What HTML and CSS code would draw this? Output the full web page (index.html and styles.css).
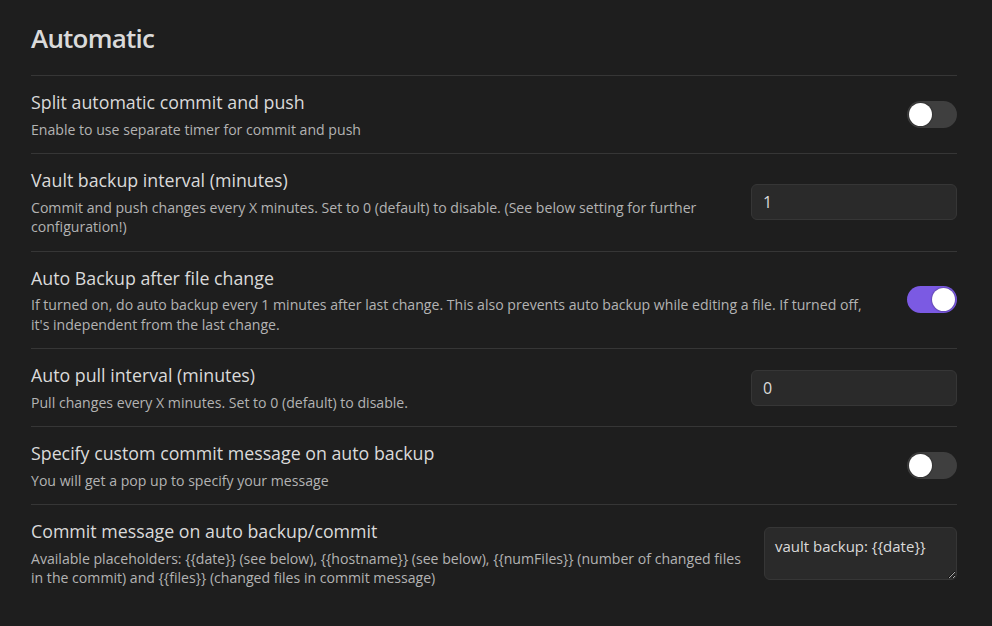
FILE: index.html
```html
<!DOCTYPE html>
<html lang="en">
<head>
<meta charset="utf-8">
<title>Automatic</title>
<link rel="stylesheet" href="styles.css">
</head>
<body>
<div class="settings">
  <h2 class="section-title">Automatic</h2>

  <div class="setting-item">
    <div class="setting-info">
      <div class="setting-name">Split automatic commit and push</div>
      <div class="setting-desc">Enable to use separate timer for commit and push</div>
    </div>
    <div class="setting-control">
      <div class="toggle"><div class="knob"></div></div>
    </div>
  </div>

  <div class="setting-item">
    <div class="setting-info">
      <div class="setting-name">Vault backup interval (minutes)</div>
      <div class="setting-desc">Commit and push changes every X minutes. Set to 0 (default) to disable. (See below setting for further configuration!)</div>
    </div>
    <div class="setting-control">
      <input class="text-input" type="text" value="1">
    </div>
  </div>

  <div class="setting-item">
    <div class="setting-info">
      <div class="setting-name">Auto Backup after file change</div>
      <div class="setting-desc">If turned on, do auto backup every 1 minutes after last change. This also prevents auto backup while editing a file. If turned off,<br>it's independent from the last change.</div>
    </div>
    <div class="setting-control">
      <div class="toggle is-on"><div class="knob"></div></div>
    </div>
  </div>

  <div class="setting-item">
    <div class="setting-info">
      <div class="setting-name">Auto pull interval (minutes)</div>
      <div class="setting-desc">Pull changes every X minutes. Set to 0 (default) to disable.</div>
    </div>
    <div class="setting-control">
      <input class="text-input" type="text" value="0">
    </div>
  </div>

  <div class="setting-item">
    <div class="setting-info">
      <div class="setting-name">Specify custom commit message on auto backup</div>
      <div class="setting-desc">You will get a pop up to specify your message</div>
    </div>
    <div class="setting-control">
      <div class="toggle"><div class="knob"></div></div>
    </div>
  </div>

  <div class="setting-item">
    <div class="setting-info">
      <div class="setting-name">Commit message on auto backup/commit</div>
      <div class="setting-desc">Available placeholders: {{date}} (see below), {{hostname}} (see below), {{numFiles}} (number of changed files in the commit) and {{files}} (changed files in commit message)</div>
    </div>
    <div class="setting-control">
      <textarea class="text-area">vault backup: {{date}}</textarea>
    </div>
  </div>
</div>
</body>
</html>
```

FILE: styles.css
```css
html, body {
  margin: 0;
  padding: 0;
  background: #1e1e1e;
}

body {
  font-family: "Open Sans", "Noto Sans", sans-serif;
  color: #dadada;
}

.settings {
  padding: 22px 35px 0 31px;
}

.section-title {
  margin: 0 0 21px 0;
  font-size: 26px;
  line-height: 32px;
  font-weight: 600;
  letter-spacing: -0.8px;
  color: #dadada;
}

.setting-item {
  display: flex;
  align-items: center;
  padding: 14px 0;
  border-top: 1px solid #363636;
}

.setting-info {
  flex: 1 1 auto;
  margin-right: 16px;
}

.setting-name {
  font-size: 17.8px;
  line-height: 24px;
  color: #dadada;
}

.setting-desc {
  margin-top: 5.5px;
  font-size: 14.1px;
  line-height: 19.5px;
  color: #b3b3b3;
}

.setting-control {
  flex: 0 0 auto;
  display: flex;
  justify-content: flex-end;
}

.toggle {
  position: relative;
  width: 50px;
  height: 27px;
  border-radius: 14px;
  background: #3f3f3f;
}

.toggle .knob {
  position: absolute;
  top: 2px;
  left: 2px;
  width: 23px;
  height: 23px;
  border-radius: 50%;
  background: #ffffff;
  box-shadow: 0 0 2px rgba(0, 0, 0, 0.6);
}

.toggle.is-on {
  background: #7b5ae3;
}

.toggle.is-on .knob {
  left: 25px;
}

.text-input {
  box-sizing: border-box;
  width: 206px;
  height: 36px;
  padding: 0 11px;
  background: #2a2a2a;
  border: 1px solid #363636;
  border-radius: 6px;
  color: #dadada;
  font-family: "Open Sans", "Noto Sans", sans-serif;
  font-size: 16px;
  outline: none;
}

.text-area {
  box-sizing: border-box;
  width: 193px;
  height: 53px;
  padding: 7px 10px;
  background: #2a2a2a;
  border: 1px solid #363636;
  border-radius: 6px;
  color: #dadada;
  font-family: "Open Sans", "Noto Sans", sans-serif;
  font-size: 15px;
  line-height: 22px;
  resize: both;
  outline: none;
}
```
